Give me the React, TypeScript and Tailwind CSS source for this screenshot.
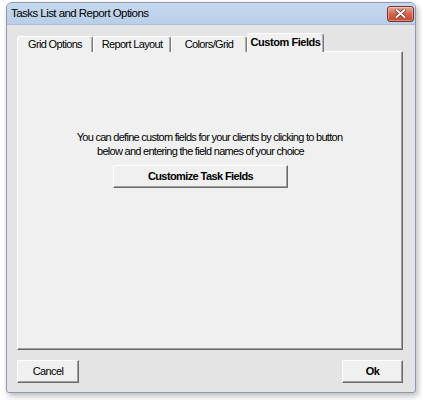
export default function App() {
  const ui = { fontFamily: '"Liberation Sans", Arial, sans-serif' };
  const tab =
    "h-[16px] flex items-center justify-center whitespace-nowrap text-[11px] tracking-[-0.65px] text-black bg-[#f0f0f0] border-t border-l border-r border-t-white border-l-white border-r-[#7a7a7a] rounded-t-[3px] shadow-[inset_-1px_0_0_#b0b0b0]";
  const btn =
    "h-[23px] flex items-center justify-center whitespace-nowrap text-[11px] tracking-[-0.6px] text-black bg-[#f0f0f0] border border-t-white border-l-white border-r-[#696969] border-b-[#696969] shadow-[inset_-1px_-1px_0_#a0a0a0]";
  return (
    <div className="w-[422px] h-[400px] bg-white overflow-hidden pt-[2px] pl-[6px]" style={ui}>
      <div className="w-[410px] h-[391px] flex flex-col border border-[#8a9bb0] rounded-t-[6px] rounded-b-[3px] shadow-[2px_3px_6px_rgba(0,0,0,0.28)] overflow-hidden bg-[#e4e4e4]">
        {/* title bar */}
        <div className="h-[22px] flex items-center justify-between pl-[4px] pr-[1px] bg-gradient-to-b from-[#c5d8ee] to-[#b9cfe8] border-b border-[#aebfd5]">
          <span className="text-[11.5px] tracking-[-0.55px] text-black leading-none pt-[1px]">
            Tasks List and Report Options
          </span>
          <div className="w-[27px] h-[16px] rounded-[3px] border border-[#7a3127] bg-gradient-to-b from-[#e9a898] via-[#d4624c] to-[#c44a34] flex items-center justify-center shadow-[inset_0_0_0_1px_rgba(255,255,255,0.35)]">
            <svg width="11" height="9" viewBox="0 0 11 9">
              <path d="M1.5 1 L9.5 8 M9.5 1 L1.5 8" stroke="#5a1c14" strokeWidth="3.2" strokeLinecap="round" />
              <path d="M1.5 1 L9.5 8 M9.5 1 L1.5 8" stroke="#ffffff" strokeWidth="2" strokeLinecap="round" />
            </svg>
          </div>
        </div>

        {/* client */}
        <div className="flex-1 flex flex-col pl-[10px] pr-[12px] pt-[9px]">
          {/* tabs */}
          <div className="h-[18px] flex items-end relative z-10 -mb-[1px]">
            <div className={`${tab} w-[76px]`}>Grid Options</div>
            <div className={`${tab} w-[78px]`}>Report Layout</div>
            <div className={`${tab} w-[76px]`}>Colors/Grid</div>
            <div className="h-[19px] w-[77px] flex items-center justify-center whitespace-nowrap text-[11px] tracking-[-0.45px] font-bold text-black bg-[#f0f0f0] border-t border-l border-r border-t-white border-l-white border-r-[#7a7a7a] rounded-t-[3px] shadow-[inset_-1px_0_0_#b0b0b0] pb-[1px]">
              Custom Fields
            </div>
          </div>
          {/* panel */}
          <div className="w-[386px] h-[299px] bg-[#f0f0f0] border border-t-white border-l-white border-r-[#696969] border-b-[#696969] shadow-[inset_-1px_-1px_0_#a0a0a0] flex flex-col items-center pt-[78px] pr-[19px]">
            <div className="text-[11px] tracking-[-0.72px] leading-[14px] text-black ml-[18px] whitespace-nowrap">
              You can define custom fields for your clients by clicking to button
            </div>
            <div className="text-[11px] tracking-[-0.72px] leading-[14px] text-black whitespace-nowrap">
              below and entering the field names of your choice
            </div>
            <div className={`${btn} w-[175px] mt-[7px] font-bold tracking-[-0.3px]`}>Customize Task Fields</div>
          </div>
          {/* bottom buttons */}
          <div className="flex justify-between mt-[10px] w-[386px]">
            <div className={`${btn} w-[62px]`}>Cancel</div>
            <div className={`${btn} w-[61px] font-bold`}>Ok</div>
          </div>
        </div>
      </div>
    </div>
  );
}
